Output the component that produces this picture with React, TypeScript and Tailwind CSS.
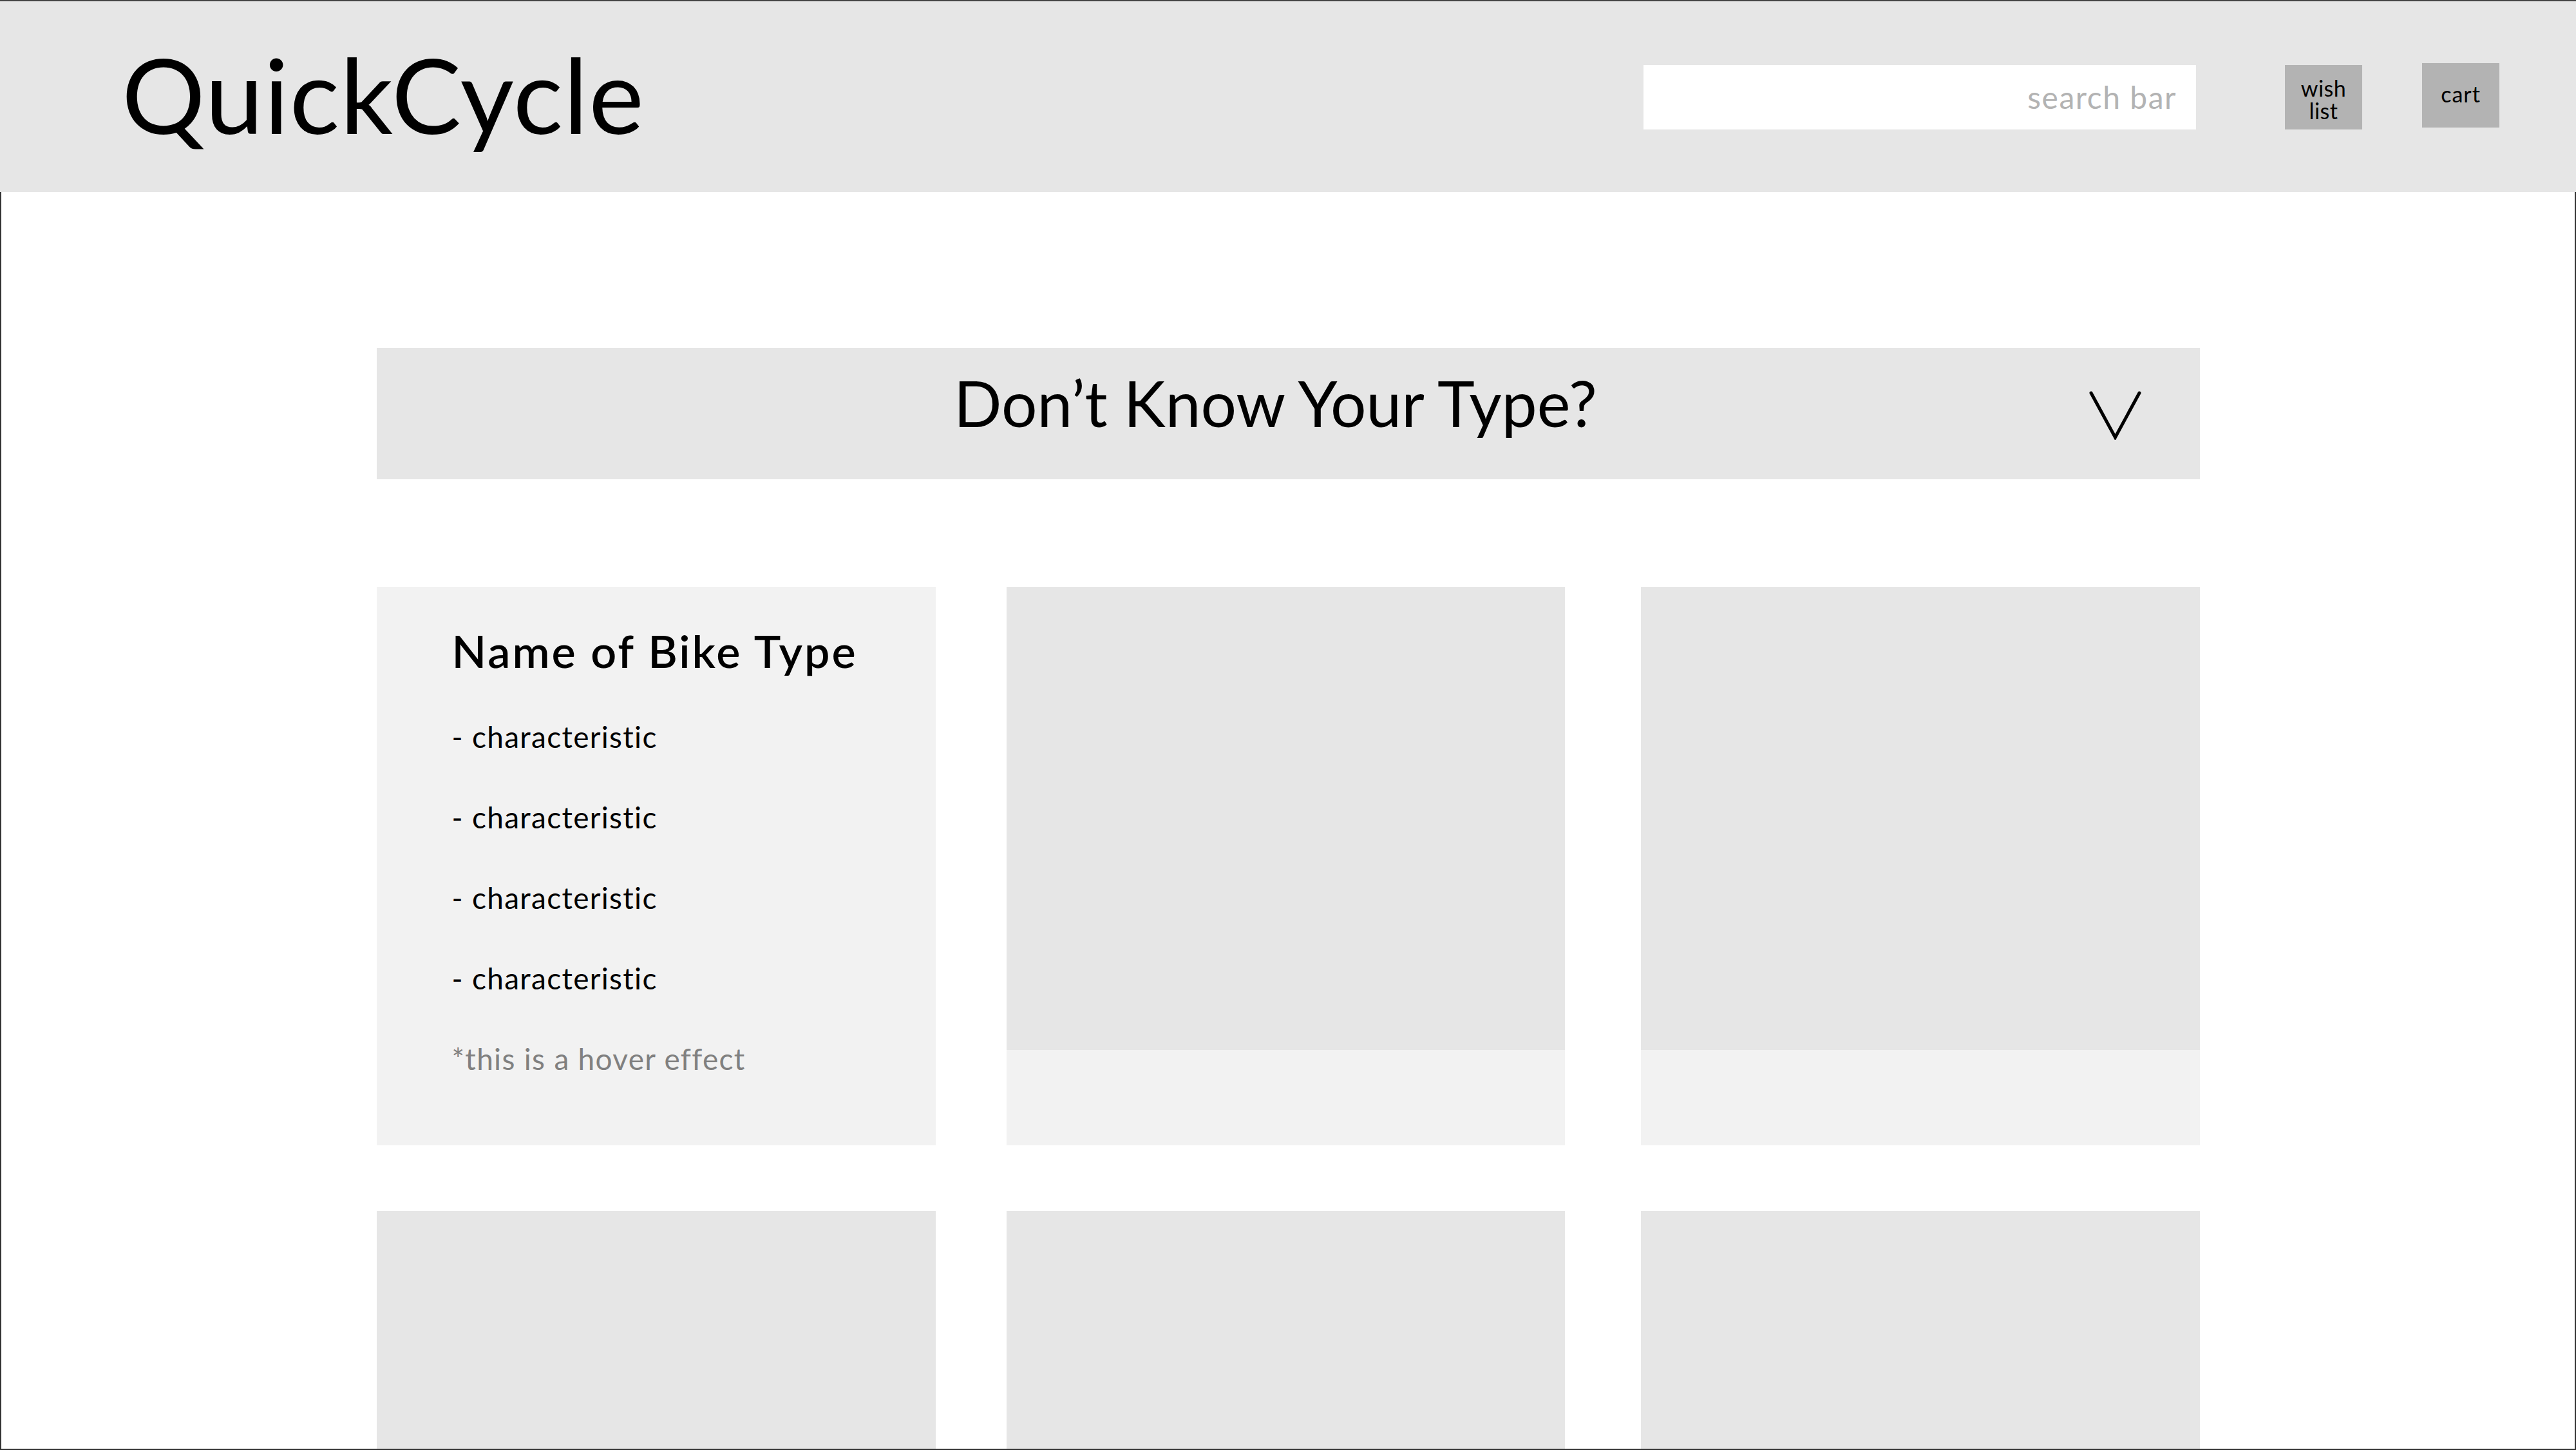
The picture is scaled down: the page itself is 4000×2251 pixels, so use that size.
import React from "react";

const font = { fontFamily: "Lato, 'Open Sans', sans-serif" };

function Chevron() {
  return (
    <svg width="81" height="76" viewBox="0 0 81 76" fill="none">
      <polyline
        points="3,3 40.5,72 78,3"
        stroke="#000"
        strokeWidth="5"
        strokeLinecap="round"
        strokeLinejoin="miter"
      />
    </svg>
  );
}

function ImageCard({ className }: { className: string }) {
  return (
    <div className={`flex flex-col h-[867px] shrink-0 ${className}`}>
      <div className="h-[719px] bg-[#e6e6e6]" />
      <div className="h-[148px] bg-[#f2f2f2]" />
    </div>
  );
}

function PlainCard({ className }: { className: string }) {
  return <div className={`h-[867px] shrink-0 bg-[#e6e6e6] ${className}`} />;
}

export default function App() {
  return (
    <div
      className="w-[4000px] h-[2251px] overflow-hidden bg-white flex flex-col text-black"
      style={font}
    >
      <header className="h-[298px] shrink-0 bg-[#e6e6e6] border-t-2 border-[#444444] flex items-start">
        <div className="pl-[189px] mt-[63px] text-[162px] leading-none font-normal tracking-[1px]">
          QuickCycle
        </div>
        <div className="flex-1" />
        <div className="mt-[99px] w-[858px] h-[100px] bg-white flex items-center justify-end pr-[30px] text-[48px] leading-[1.2] tracking-[1.5px] text-[#b3b3b3]">
          search bar
        </div>
        <div className="ml-[138px] mt-[99px] w-[120px] h-[100px] bg-[#b3b3b3] flex flex-col items-center justify-center pt-[6px] text-[34px] leading-[35px] tracking-[0.5px]">
          <span>wish</span>
          <span>list</span>
        </div>
        <div className="ml-[93px] mr-[119px] mt-[96px] w-[120px] h-[100px] bg-[#b3b3b3] flex items-center justify-center pb-[4px] text-[34px] leading-[40px] tracking-[1px]">
          cart
        </div>
      </header>

      <main className="flex-1 min-h-0 overflow-hidden border-l-2 border-r-2 border-b-2 border-[#333333]">
        <div className="w-[2831px] mx-auto pt-[242px]">
          <div className="h-[204px] bg-[#e6e6e6] flex items-center pr-[91px]">
            <div className="flex-1 pl-[133px] text-center text-[98px] leading-[118px] mb-[34px]">
              Don’t Know Your Type?
            </div>
            <div className="w-[81px] h-[76px] mt-[6px]">
              <Chevron />
            </div>
          </div>

          <div className="flex mt-[167px]">
            <div className="w-[868px] h-[867px] shrink-0 bg-[#f2f2f2] pl-[117px] pt-[49px]">
              <div className="text-[70px] leading-[100px] font-semibold tracking-[3px]">
                Name of Bike Type
              </div>
              <div className="mt-[21px] text-[46px] leading-[125px] tracking-[1.3px]">
                <div>- characteristic</div>
                <div>- characteristic</div>
                <div>- characteristic</div>
                <div>- characteristic</div>
                <div className="text-[#808080]">*this is a hover effect</div>
              </div>
            </div>
            <ImageCard className="w-[867px] ml-[110px]" />
            <ImageCard className="w-[868px] ml-[118px]" />
          </div>

          <div className="flex mt-[102px]">
            <PlainCard className="w-[868px]" />
            <PlainCard className="w-[867px] ml-[110px]" />
            <PlainCard className="w-[868px] ml-[118px]" />
          </div>
        </div>
      </main>
    </div>
  );
}
